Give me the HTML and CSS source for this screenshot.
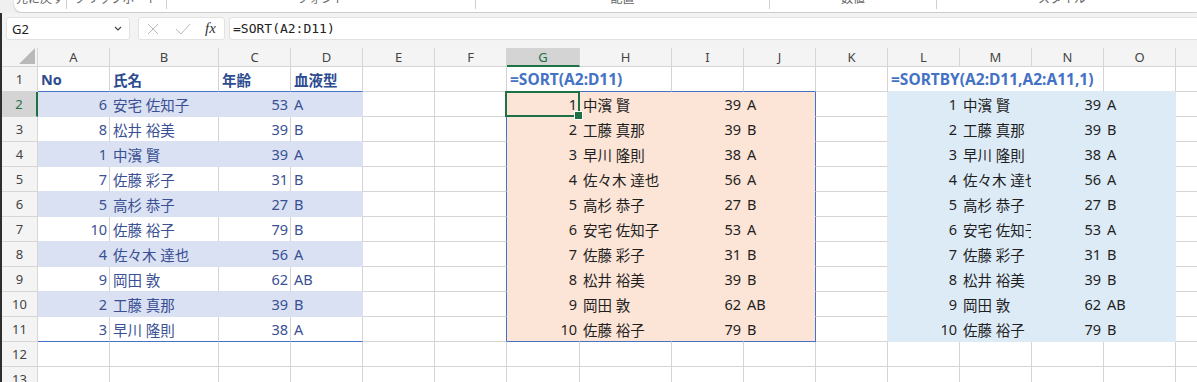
FILE: index.html
```html
<!DOCTYPE html>
<html lang="ja">
<head>
    <meta charset="UTF-8">
    <title>SORT / SORTBY</title>
    <link rel="stylesheet" href="styles.css">
</head>
<body>

    <div class="ribbon">
        <div class="ribbon-card">
            <div class="group g1"><span>元に戻す</span></div>
            <div class="group g2"><span>クリップボード</span></div>
            <div class="group g3"><span>フォント</span></div>
            <div class="group g4"><span>配置</span></div>
            <div class="group g5"><span>数値</span></div>
            <div class="group last"><span>スタイル</span></div>
        </div>
    </div>

    <div class="app">
        <div class="fbar">
            <div class="namebox">
                <span>G2</span>
                <svg width="8" height="5" viewBox="0 0 8 5"><path d="M1 1 L4 4 L7 1" fill="none" stroke="#444" stroke-width="1.2"/></svg>
            </div>
            <div class="fxbox">
                <svg width="12" height="12" viewBox="0 0 12 12"><path d="M1 1 L11 11 M11 1 L1 11" fill="none" stroke="#b8b8b8" stroke-width="1"/></svg>
                <svg width="16" height="12" viewBox="0 0 16 12"><path d="M1 6 L6 11 L15 1" fill="none" stroke="#b8b8b8" stroke-width="1"/></svg>
                <span class="fx">fx</span>
            </div>
            <div class="formula">=SORT(A2:D11)</div>
        </div>

        <div class="sheet">
            <!-- column headers -->
            <div class="corner"><svg width="16" height="16" viewBox="0 0 16 16"><path d="M16 0 L16 16 L0 16 Z" fill="#b9b9b9"/></svg></div>
            <div class="hd">A</div><div class="hd">B</div><div class="hd">C</div><div class="hd">D</div>
            <div class="hd">E</div><div class="hd">F</div><div class="hd on">G</div><div class="hd">H</div>
            <div class="hd">I</div><div class="hd">J</div><div class="hd">K</div><div class="hd">L</div>
            <div class="hd">M</div><div class="hd">N</div><div class="hd">O</div><div class="hd">P</div>

            <!-- row 1 -->
            <div class="rh">1</div>
            <div class="c th bb">No</div><div class="c th bb">氏名</div><div class="c th bb">年齢</div><div class="c th bb">血液型</div>
            <div class="c"></div><div class="c"></div>
            <div class="c fml ov hr bb">=SORT(A2:D11)</div><div class="c bb"></div><div class="c bb"></div><div class="c bb"></div>
            <div class="c"></div>
            <div class="c fml ov hr lbb">=SORTBY(A2:D11,A2:A11,1)</div><div class="c hr lbb"></div><div class="c lbb"></div><div class="c lbb"></div>
            <div class="c"></div>

            <!-- row 2 -->
            <div class="rh on">2</div>
            <div class="c t band n">6</div><div class="c t band">安宅 佐知子</div><div class="c t band n">53</div><div class="c t band">A</div>
            <div class="c"></div><div class="c br"></div>
            <div class="c pe n sel">1</div><div class="c pe">中濱 賢</div><div class="c pe n">39</div><div class="c pe br">A</div>
            <div class="c lr"></div>
            <div class="c lb n">1</div><div class="c lb">中濱 賢</div><div class="c lb n">39</div><div class="c lb">A</div>
            <div class="c"></div>

            <!-- row 3 -->
            <div class="rh">3</div>
            <div class="c t gb n">8</div><div class="c t gb">松井 裕美</div><div class="c t gb n">39</div><div class="c t gb">B</div>
            <div class="c"></div><div class="c br"></div>
            <div class="c pe n">2</div><div class="c pe">工藤 真那</div><div class="c pe n">39</div><div class="c pe br">B</div>
            <div class="c lr"></div>
            <div class="c lb n">2</div><div class="c lb">工藤 真那</div><div class="c lb n">39</div><div class="c lb">B</div>
            <div class="c"></div>

            <!-- row 4 -->
            <div class="rh">4</div>
            <div class="c t band n">1</div><div class="c t band">中濱 賢</div><div class="c t band n">39</div><div class="c t band">A</div>
            <div class="c"></div><div class="c br"></div>
            <div class="c pe n">3</div><div class="c pe">早川 隆則</div><div class="c pe n">38</div><div class="c pe br">A</div>
            <div class="c lr"></div>
            <div class="c lb n">3</div><div class="c lb">早川 隆則</div><div class="c lb n">38</div><div class="c lb">A</div>
            <div class="c"></div>

            <!-- row 5 -->
            <div class="rh">5</div>
            <div class="c t gb n">7</div><div class="c t gb">佐藤 彩子</div><div class="c t gb n">31</div><div class="c t gb">B</div>
            <div class="c"></div><div class="c br"></div>
            <div class="c pe n">4</div><div class="c pe">佐々木 達也</div><div class="c pe n">56</div><div class="c pe br">A</div>
            <div class="c lr"></div>
            <div class="c lb n">4</div><div class="c lb">佐々木 達也</div><div class="c lb n">56</div><div class="c lb">A</div>
            <div class="c"></div>

            <!-- row 6 -->
            <div class="rh">6</div>
            <div class="c t band n">5</div><div class="c t band">高杉 恭子</div><div class="c t band n">27</div><div class="c t band">B</div>
            <div class="c"></div><div class="c br"></div>
            <div class="c pe n">5</div><div class="c pe">高杉 恭子</div><div class="c pe n">27</div><div class="c pe br">B</div>
            <div class="c lr"></div>
            <div class="c lb n">5</div><div class="c lb">高杉 恭子</div><div class="c lb n">27</div><div class="c lb">B</div>
            <div class="c"></div>

            <!-- row 7 -->
            <div class="rh">7</div>
            <div class="c t gb n">10</div><div class="c t gb">佐藤 裕子</div><div class="c t gb n">79</div><div class="c t gb">B</div>
            <div class="c"></div><div class="c br"></div>
            <div class="c pe n">6</div><div class="c pe">安宅 佐知子</div><div class="c pe n">53</div><div class="c pe br">A</div>
            <div class="c lr"></div>
            <div class="c lb n">6</div><div class="c lb">安宅 佐知子</div><div class="c lb n">53</div><div class="c lb">A</div>
            <div class="c"></div>

            <!-- row 8 -->
            <div class="rh">8</div>
            <div class="c t band n">4</div><div class="c t band">佐々木 達也</div><div class="c t band n">56</div><div class="c t band">A</div>
            <div class="c"></div><div class="c br"></div>
            <div class="c pe n">7</div><div class="c pe">佐藤 彩子</div><div class="c pe n">31</div><div class="c pe br">B</div>
            <div class="c lr"></div>
            <div class="c lb n">7</div><div class="c lb">佐藤 彩子</div><div class="c lb n">31</div><div class="c lb">B</div>
            <div class="c"></div>

            <!-- row 9 -->
            <div class="rh">9</div>
            <div class="c t gb n">9</div><div class="c t gb">岡田 敦</div><div class="c t gb n">62</div><div class="c t gb">AB</div>
            <div class="c"></div><div class="c br"></div>
            <div class="c pe n">8</div><div class="c pe">松井 裕美</div><div class="c pe n">39</div><div class="c pe br">B</div>
            <div class="c lr"></div>
            <div class="c lb n">8</div><div class="c lb">松井 裕美</div><div class="c lb n">39</div><div class="c lb">B</div>
            <div class="c"></div>

            <!-- row 10 -->
            <div class="rh">10</div>
            <div class="c t band n">2</div><div class="c t band">工藤 真那</div><div class="c t band n">39</div><div class="c t band">B</div>
            <div class="c"></div><div class="c br"></div>
            <div class="c pe n">9</div><div class="c pe">岡田 敦</div><div class="c pe n">62</div><div class="c pe br">AB</div>
            <div class="c lr"></div>
            <div class="c lb n">9</div><div class="c lb">岡田 敦</div><div class="c lb n">62</div><div class="c lb">AB</div>
            <div class="c"></div>

            <!-- row 11 -->
            <div class="rh">11</div>
            <div class="c t bb n">3</div><div class="c t bb">早川 隆則</div><div class="c t bb n">38</div><div class="c t bb">A</div>
            <div class="c"></div><div class="c br"></div>
            <div class="c pe bb n">10</div><div class="c pe bb">佐藤 裕子</div><div class="c pe bb n">79</div><div class="c pe bb br">B</div>
            <div class="c lr"></div>
            <div class="c lb n">10</div><div class="c lb">佐藤 裕子</div><div class="c lb n">79</div><div class="c lb">B</div>
            <div class="c"></div>

            <!-- row 12 -->
            <div class="rh">12</div>
            <div class="c"></div><div class="c"></div><div class="c"></div><div class="c"></div>
            <div class="c"></div><div class="c"></div><div class="c"></div><div class="c"></div>
            <div class="c"></div><div class="c"></div><div class="c"></div><div class="c"></div>
            <div class="c"></div><div class="c"></div><div class="c"></div><div class="c"></div>

            <!-- row 13 -->
            <div class="rh">13</div>
            <div class="c"></div><div class="c"></div><div class="c"></div><div class="c"></div>
            <div class="c"></div><div class="c"></div><div class="c"></div><div class="c"></div>
            <div class="c"></div><div class="c"></div><div class="c"></div><div class="c"></div>
            <div class="c"></div><div class="c"></div><div class="c"></div><div class="c"></div>
        </div>
    </div>

</body>
</html>
```

FILE: styles.css
```css
* {
    box-sizing: border-box;
}

body {
    margin: 0;
    width: 1197px;
    height: 382px;
    overflow: hidden;
    background-color: #fff;
    font-family: "Noto Sans", "Noto Sans CJK JP", sans-serif;
}

/* ribbon (only the bottom edge is visible) */
.ribbon {
    height: 13px;
    padding-left: 14px;
    background-color: #f0f0f0;
}

.ribbon-card {
    display: flex;
    height: 12px;
    overflow: hidden;
    background-color: #fff;
    border-radius: 0 0 0 8px;
    box-shadow: 0 1px 2px rgba(0, 0, 0, 0.2);
}

.group {
    height: 9px;
    border-right: 1px solid #cfcfcf;
    text-align: center;
    font-family: "Noto Sans CJK JP", sans-serif;
    font-size: 12px;
    line-height: 14px;
    color: #666;
}

.group span {
    display: block;
    margin-top: -9px;
}

.g1 { width: 53px; }
.g2 { width: 100px; }
.g3 { width: 309px; }
.g4 { width: 294px; }
.g5 { width: 167px; }

.group.last {
    width: 250px;
    border-right: none;
}

/* formula bar */
.app {
    border-left: 2px solid #2e2e2e;
}

.fbar {
    display: flex;
    align-items: center;
    gap: 8px;
    height: 35px;
    padding: 4px 0 8px 4px;
    background-color: #f3f3f3;
}

.namebox {
    display: flex;
    align-items: center;
    justify-content: space-between;
    width: 124px;
    height: 23px;
    padding: 0 7px 0 5px;
    background-color: #fff;
    border: 1px solid #e2e2e2;
    border-radius: 3px;
    font-size: 13px;
    color: #222;
}

.fxbox {
    display: flex;
    align-items: center;
    width: 87px;
    height: 23px;
    padding-left: 8px;
    background-color: #fff;
    border: 1px solid #e2e2e2;
    border-radius: 3px;
}

.fxbox svg + svg {
    margin-left: 16px;
}

.fx {
    margin-left: 14px;
    font-family: "Liberation Serif", serif;
    font-style: italic;
    font-size: 15px;
    color: #333;
}

.formula {
    flex: 1;
    height: 23px;
    margin-left: -4px;
    padding-left: 3px;
    background-color: #fff;
    border: 1px solid #e2e2e2;
    border-right: none;
    border-radius: 3px 0 0 3px;
    font-family: "DejaVu Sans Mono", monospace;
    font-size: 13px;
    line-height: 21px;
    color: #222;
}

/* grid */
.sheet {
    display: grid;
    grid-template-columns: 36px 72px 109px 72px 72px 72px 72px 73px 92px 72px 72px 72px 72px 72px 72px 72px 72px;
    grid-template-rows: 19px repeat(13, 25px);
}

.corner {
    display: flex;
    align-items: flex-end;
    justify-content: flex-end;
    padding: 0 2px 2px 0;
    background-color: #f4f4f4;
    border-right: 1px solid #d6d6d6;
    border-bottom: 1px solid #d6d6d6;
}

.hd, .rh {
    display: flex;
    align-items: center;
    justify-content: center;
    background-color: #f4f4f4;
    border-right: 1px solid #d6d6d6;
    border-bottom: 1px solid #d6d6d6;
    font-size: 13px;
    color: #444;
}

.hd.on {
    background-color: #d4d4d4;
    color: #1e7145;
    border-bottom: 2px solid #1e7145;
}

.rh.on {
    background-color: #d4d4d4;
    color: #1e7145;
    border-right: 2px solid #1e7145;
}

.c {
    display: flex;
    align-items: center;
    padding: 0 2px 0 3px;
    border-right: 1px solid #d4d4d4;
    border-bottom: 1px solid #d4d4d4;
    white-space: nowrap;
    overflow: hidden;
    font-size: 14.5px;
    color: #1f1f1f;
}

.n {
    justify-content: flex-end;
}

.ov {
    overflow: visible;
}

/* table A1:D11 */
.t {
    color: #3a4f94;
}

.th {
    font-weight: bold;
    color: #2d4b90;
}

.band {
    background-color: #d9e1f2;
    border-color: #d9e1f2;
}

.gb {
    border-bottom-color: #d9e1f2;
}

/* spill results */
.fml {
    font-size: 15.5px;
    font-weight: bold;
    color: #4472c4;
}

.pe {
    background-color: #fce4d6;
    border-color: #fce4d6;
}

.lb {
    background-color: #ddebf7;
    border-color: #ddebf7;
}

/* gridline hidden under overflowing text */
.hr {
    border-right-color: transparent;
}

.lr {
    border-right-color: #ddebf7;
}

.lbb {
    border-bottom-color: #ddebf7;
}

.bb {
    border-bottom-color: #4472c4;
}

.br {
    border-right-color: #4472c4;
}

/* active cell */
.sel {
    position: relative;
    overflow: visible;
    z-index: 2;
}

.sel::after {
    content: "";
    position: absolute;
    left: -2px;
    top: -1px;
    right: -1px;
    bottom: -1px;
    border: 2px solid #1e7145;
}

.sel::before {
    content: "";
    position: absolute;
    right: -4px;
    bottom: -4px;
    width: 7px;
    height: 7px;
    background-color: #1e7145;
    border: 1px solid #fff;
    z-index: 1;
}
```
